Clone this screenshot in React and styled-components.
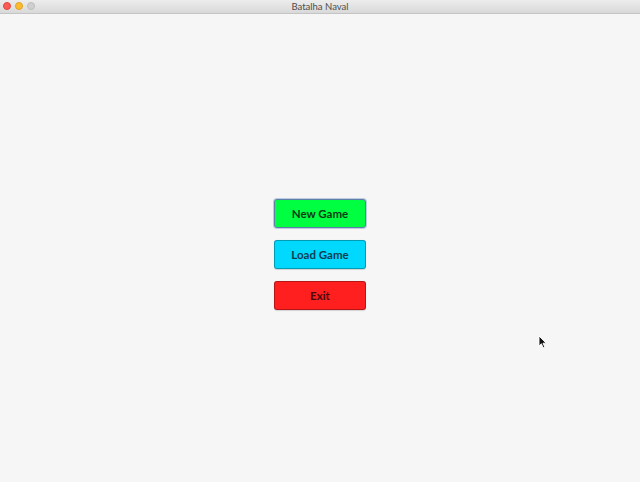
import React from 'react';
import styled, { createGlobalStyle } from 'styled-components';

const GlobalStyle = createGlobalStyle`
  html, body {
    margin: 0;
    padding: 0;
    background: #f6f6f7;
  }
  body {
    font-family: Lato, "Liberation Sans", sans-serif;
  }
`;

const buttons = [
  { label: 'New Game', bg: '#00ff41', fg: '#0b3a14', focused: true },
  { label: 'Load Game', bg: '#00d8fd', fg: '#0d3c52' },
  { label: 'Exit', bg: '#ff1f1f', fg: '#460808' },
];

const App = () => {
  return (
    <>
      <GlobalStyle />
      <Window>
        <TitleBar>
          <Lights>
            <Light color="#fc5b57" border="#e0443e" />
            <Light color="#fdbb2e" border="#dea123" />
            <Light color="#cfcfcf" border="#bdbdbd" />
          </Lights>
          <Title>Batalha Naval</Title>
        </TitleBar>
        <Content>
          <Menu>
            {buttons.map((b) => (
              <MenuButton key={b.label} bg={b.bg} fg={b.fg} focused={b.focused}>
                {b.label}
              </MenuButton>
            ))}
          </Menu>
          <Pointer width="10" height="14" viewBox="0 0 10 14">
            <path
              d="M1 1 L1 11 L3.4 8.8 L5.2 12.8 L6.8 12 L5 8.2 L8.2 8.2 Z"
              fill="#111"
              stroke="#fff"
              strokeWidth="0.9"
              strokeLinejoin="round"
            />
          </Pointer>
        </Content>
      </Window>
    </>
  );
};

const Window = styled.div`
  width: 640px;
  height: 482px;
  display: flex;
  flex-direction: column;
  background: #f6f6f7;
  overflow: hidden;
`;

const TitleBar = styled.div`
  position: relative;
  height: 13px;
  flex: none;
  display: flex;
  align-items: center;
  justify-content: center;
  background: linear-gradient(#ececec, #d9d9d9);
  border-bottom: 1px solid #c4c4c4;
`;

const Lights = styled.div`
  position: absolute;
  left: 3px;
  top: 2px;
  display: flex;
  gap: 4px;
`;

const Light = styled.span`
  width: 8px;
  height: 8px;
  border-radius: 50%;
  box-sizing: border-box;
  background: ${({ color }) => color};
  border: 0.5px solid ${({ border }) => border};
`;

const Title = styled.span`
  font-family: Lato, "Liberation Sans", sans-serif;
  font-size: 9.5px;
  color: #4d4d4d;
  line-height: 13px;
`;

const Content = styled.div`
  position: relative;
  flex: 1;
  display: flex;
  justify-content: center;
`;

const Menu = styled.div`
  display: flex;
  flex-direction: column;
  gap: 12px;
  padding-top: 185px;
`;

const MenuButton = styled.button`
  width: 92px;
  height: 29px;
  box-sizing: border-box;
  border-radius: 3px;
  border: 1px solid ${({ focused }) => (focused ? '#5f7fa8' : 'rgba(0,0,0,0.28)')};
  box-shadow: ${({ focused }) =>
    focused ? '0 0 0 1px rgba(120,150,200,0.45)' : '0 0.5px 1px rgba(0,0,0,0.15)'};
  background: ${({ bg }) => bg};
  color: ${({ fg }) => fg};
  font-family: Lato, "Liberation Sans", sans-serif;
  font-size: 11.5px;
  font-weight: 700;
  padding: 0;
  cursor: pointer;
`;

const Pointer = styled.svg`
  position: absolute;
  left: 538px;
  top: 321px;
`;

export default App;
